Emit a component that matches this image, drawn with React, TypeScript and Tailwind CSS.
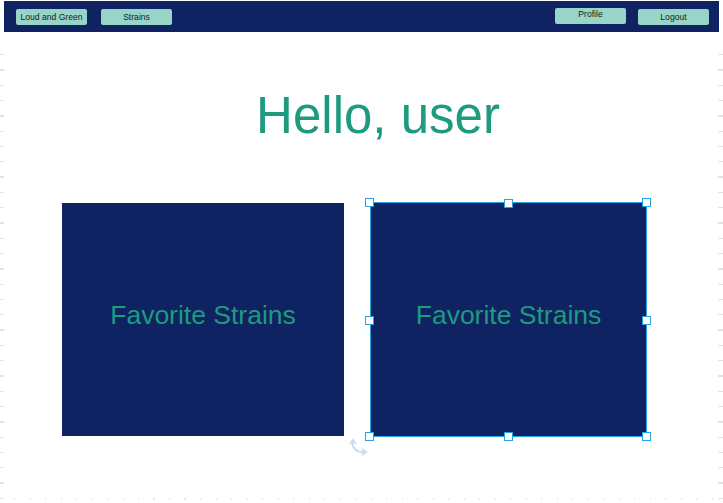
import React from "react";

const Handle = ({ cls }: { cls: string }) => (
  <div className={`absolute w-[9px] h-[9px] bg-white border border-[#29a0e0] ${cls}`} />
);

export default function App() {
  const font = { fontFamily: '"Liberation Sans", Arial, sans-serif' };
  return (
    <div className="relative w-[723px] h-[503px] bg-white overflow-hidden" style={font}>
      {/* faint ruler ticks */}
      <div className="absolute left-0 top-[40px] w-[4px] h-[460px] bg-[repeating-linear-gradient(to_bottom,transparent_0px,transparent_14px,#e3e3e3_14px,#e3e3e3_15.3px)]" />
      <div className="absolute right-0 top-[40px] w-[5px] h-[460px] bg-[repeating-linear-gradient(to_bottom,transparent_0px,transparent_14px,#e3e3e3_14px,#e3e3e3_15.3px)]" />
      <div className="absolute left-0 bottom-[3px] w-full h-[2px] bg-[repeating-linear-gradient(to_right,transparent_0px,transparent_14px,#e6e6e6_14px,#e6e6e6_15.5px)]" />

      <div className="flex flex-col">
        <nav className="mx-[4px] mt-[1px] h-[31px] bg-[#0f2362] flex items-start">
          <button className="ml-[12px] mt-[8px] w-[71px] h-[16px] bg-[#96d5c8] rounded-[2px] text-[8.6px] text-[#1a1a1a] leading-none">
            Loud and Green
          </button>
          <button className="ml-[14px] mt-[8px] w-[71px] h-[16px] bg-[#96d5c8] rounded-[2px] text-[8.6px] text-[#1a1a1a] leading-none">
            Strains
          </button>
          <div className="flex-1" />
          <button className="mt-[7px] w-[71px] h-[16px] bg-[#96d5c8] rounded-[2px] text-[8.6px] text-[#1a1a1a] leading-none pb-[4px]">
            Profile
          </button>
          <button className="ml-[12px] mr-[10px] mt-[8px] w-[71px] h-[16px] bg-[#96d5c8] rounded-[2px] text-[8.6px] text-[#1a1a1a] leading-none">
            Logout
          </button>
        </nav>

        <h1 className="mt-[52px] pl-[33px] text-center text-[51px] leading-[64px] text-[#1e9a7e]">
          Hello, user
        </h1>

        <div className="mt-[54px] ml-[62px] flex items-start gap-[26px]">
          <div className="mt-[1px] w-[282px] h-[233px] bg-[#0f2362] flex items-center justify-center pb-[7px]">
            <span className="text-[26.5px] text-[#1e9a7e]">Favorite Strains</span>
          </div>
          <div className="relative w-[277px] h-[235px] bg-[#0f2362] border border-[#29a0e0] flex items-center justify-center pb-[7px]">
            <span className="text-[26.5px] text-[#1e9a7e]">Favorite Strains</span>
            <Handle cls="-left-[6px] -top-[5px]" />
            <Handle cls="left-[133px] -top-[4px]" />
            <Handle cls="-right-[5px] -top-[5px]" />
            <Handle cls="-left-[6px] top-[113px]" />
            <Handle cls="-right-[5px] top-[113px]" />
            <Handle cls="-left-[6px] -bottom-[5px]" />
            <Handle cls="left-[133px] -bottom-[5px]" />
            <Handle cls="-right-[5px] -bottom-[5px]" />
            <svg className="absolute -left-[22px] -bottom-[22px]" width="20" height="20" viewBox="0 0 20 20">
              <path d="M4 3 C2 9 8 15 15 14" fill="none" stroke="#c9dcf4" strokeWidth="2" />
              <path d="M1 6 L4 2 L7 6" fill="none" stroke="#c9dcf4" strokeWidth="2" />
              <path d="M13 11 L17 14 L13 17" fill="none" stroke="#c9dcf4" strokeWidth="2" />
            </svg>
          </div>
        </div>
      </div>
    </div>
  );
}
